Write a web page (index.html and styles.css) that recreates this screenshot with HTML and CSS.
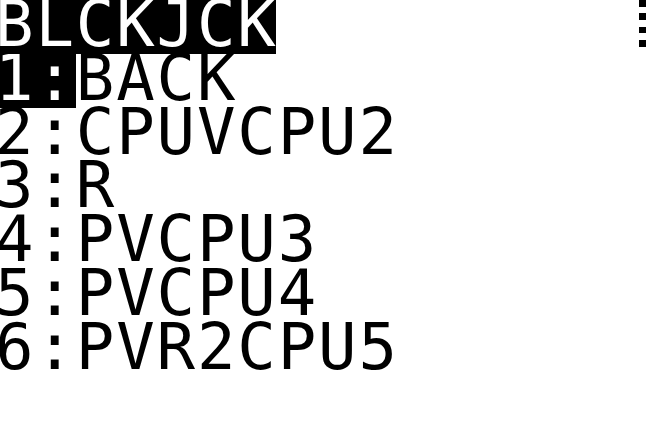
FILE: index.html
```html
<!DOCTYPE html>
<html>
<head>
<meta charset="utf-8">
<link rel="stylesheet" href="styles.css">
</head>
<body>
<div class="screen">
  <div class="row"><span class="cell inv title">BLCKJCK</span></div>
  <div class="row"><span class="cell inv num">1:</span><span class="cell">BACK</span></div>
  <div class="row"><span class="cell">2:CPUVCPU2</span></div>
  <div class="row"><span class="cell">3:R</span></div>
  <div class="row"><span class="cell">4:PVCPU3</span></div>
  <div class="row"><span class="cell">5:PVCPU4</span></div>
  <div class="row"><span class="cell">6:PVR2CPU5</span></div>
  <div class="row"></div>
</div>
<div class="busy"><i></i><i></i><i></i><i></i></div>
</body>
</html>
```
FILE: styles.css
```css
html, body {
  margin: 0;
  padding: 0;
  background: #fff;
}
body {
  width: 646px;
  height: 430px;
  overflow: hidden;
  position: relative;
}
.screen {
  font-family: "DejaVu Sans Mono", "Liberation Mono", monospace;
  font-size: 64px;
  letter-spacing: 1.845px;
  color: #000;
  display: flex;
  flex-direction: column;
}
.row {
  display: flex;
  height: 53.75px;
  line-height: 49.7px;
  white-space: pre;
}
.cell {
  display: block;
  text-indent: -5px;
}
.inv {
  background: #000;
  color: #fff;
  overflow: hidden;
}
.title {
  width: 276px;
}
.num {
  width: 76px;
  margin-right: 4.75px;
}
.busy {
  position: absolute;
  top: 0;
  right: 0;
  width: 6.7px;
  display: flex;
  flex-direction: column;
  gap: 6.7px;
}
.busy i {
  display: block;
  height: 6.7px;
  background: #000;
}
```
